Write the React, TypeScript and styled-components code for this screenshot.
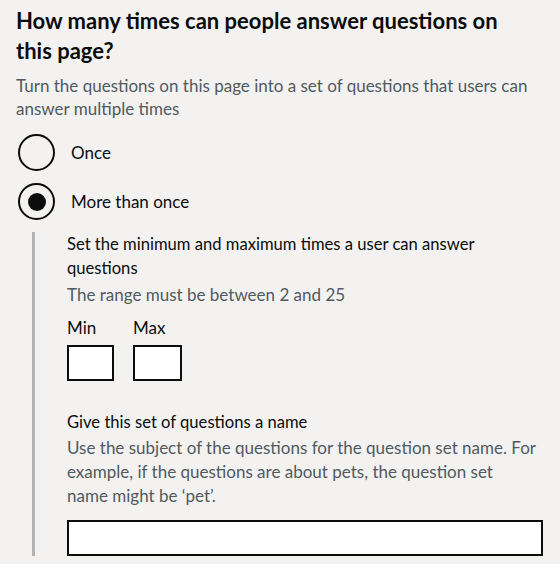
import React, { useState } from "react";
import styled, { createGlobalStyle } from "styled-components";

const GlobalStyle = createGlobalStyle`
  html, body {
    margin: 0;
    padding: 0;
    background: #f3f2f1;
  }
  body {
    font-family: Lato, "Liberation Sans", Arial, sans-serif;
    color: #0b0c0c;
  }
`;

const Page = styled.div`
  width: 560px;
  height: 564px;
  overflow: hidden;
  padding: 6px 16px 0;
  box-sizing: border-box;
`;

const Heading = styled.h1`
  margin: 0;
  max-width: 500px;
  font-size: 22px;
  line-height: 30px;
  font-weight: 700;
`;

const Hint = styled.div<{ $gap?: number; $top?: number }>`
  color: #505a5f;
  font-size: 17px;
  line-height: ${(p) => (p.$gap ? p.$gap : 23)}px;
  margin-top: ${(p) => p.$top ?? 0}px;
`;

const Radios = styled.div`
  margin-top: 14px;
  display: flex;
  flex-direction: column;
  gap: 12px;
`;

const RadioRow = styled.label`
  display: flex;
  align-items: center;
  gap: 16px;
  font-size: 17px;
  cursor: pointer;
`;

const Circle = styled.span<{ $checked: boolean }>`
  width: 37px;
  height: 37px;
  border: 2px solid #0b0c0c;
  border-radius: 50%;
  box-sizing: border-box;
  margin-left: 2px;
  display: flex;
  align-items: center;
  justify-content: center;
  &::after {
    content: "";
    width: 18px;
    height: 18px;
    border-radius: 50%;
    background: #0b0c0c;
    display: ${(p) => (p.$checked ? "block" : "none")};
  }
`;

const Conditional = styled.div`
  margin: 12px 0 0 16px;
  border-left: 3px solid #b1b4b6;
  padding: 0 0 0 32px;
`;

const Label = styled.div`
  font-size: 16.6px;
  line-height: 24px;
`;

const Group = styled.div`
  margin-bottom: 29px;
`;

const Pair = styled.div`
  display: flex;
  gap: 19px;
  margin-top: 8px;
`;

const Field = styled.div`
  display: flex;
  flex-direction: column;
  gap: 7px;
`;

const Small = styled.div`
  font-size: 17px;
  line-height: 20px;
`;

const Box = styled.input<{ $w: number }>`
  display: block;
  width: ${(p) => p.$w}px;
  height: 36px;
  box-sizing: border-box;
  border: 2px solid #0b0c0c;
  background: #fff;
  margin: 0;
  padding: 4px;
  font-size: 16px;
  outline: none;
`;

const NameBox = styled(Box)`
  margin-top: 12px;
`;

export default function App() {
  const [choice, setChoice] = useState<"once" | "more">("more");
  return (
    <Page>
      <GlobalStyle />
      <Heading>How many times can people answer questions on this page?</Heading>
      <Hint $top={8}>
        Turn the questions on this page into a set of questions that users can answer multiple times
      </Hint>
      <Radios>
        <RadioRow onClick={() => setChoice("once")}>
          <Circle $checked={choice === "once"} />
          Once
        </RadioRow>
        <RadioRow onClick={() => setChoice("more")}>
          <Circle $checked={choice === "more"} />
          More than once
        </RadioRow>
      </Radios>
      <Conditional>
        <Group>
          <Label>Set the minimum and maximum times a user can answer questions</Label>
          <Hint $gap={30}>The range must be between 2 and 25</Hint>
          <Pair>
            <Field>
              <Small>Min</Small>
              <Box $w={47} />
            </Field>
            <Field>
              <Small>Max</Small>
              <Box $w={49} />
            </Field>
          </Pair>
        </Group>
        <Label>Give this set of questions a name</Label>
        <Hint $gap={24} $top={2}>
          Use the subject of the questions for the question set name. For example, if the questions are about pets, the question set
          <br />
          name might be ‘pet’.
        </Hint>
        <NameBox $w={476} />
      </Conditional>
    </Page>
  );
}
